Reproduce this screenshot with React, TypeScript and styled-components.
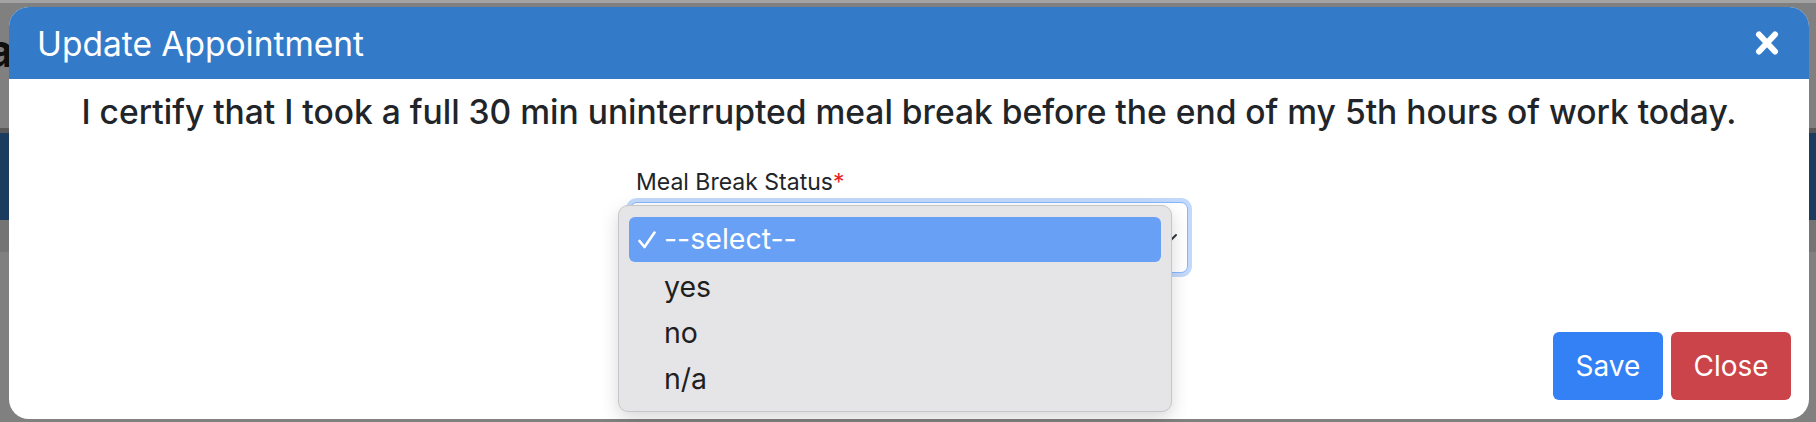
import React from "react";
import styled, { createGlobalStyle } from "styled-components";

const GlobalStyle = createGlobalStyle`
  html, body { margin: 0; padding: 0; }
  body {
    width: 1816px;
    height: 422px;
    overflow: hidden;
    background: #808080;
    font-family: Inter, "Noto Sans", "Liberation Sans", sans-serif;
  }
`;

const Page = styled.div`
  position: relative;
  width: 1816px;
  height: 422px;
  overflow: hidden;
  background: #808080;
`;

const Underlay = styled.div`
  display: flex;
  flex-direction: column;
  width: 100%;
`;

const TopStrip = styled.div`
  height: 3px;
  background: #a3a3a3;
`;

const HeadingRow = styled.div`
  height: 125px;
  display: flex;
  align-items: flex-start;
`;

const PageHeading = styled.h1`
  margin: 24px 0 0 -13px;
  font-size: 46px;
  font-weight: 700;
  line-height: 1;
  color: #0f0f0f;
`;

const NavEdge = styled.div`
  height: 5px;
  background: #595959;
`;

const NavBand = styled.div`
  height: 87px;
  background: #1b3b5f;
`;

const SubBand = styled.div`
  height: 32px;
  background: #747474;
`;

const Dialog = styled.div`
  position: absolute;
  left: 9px;
  top: 7px;
  width: 1800px;
  height: 412px;
  background: #ffffff;
  border-radius: 20px;
  display: flex;
  flex-direction: column;
`;

const Header = styled.div`
  height: 72px;
  flex: none;
  box-sizing: border-box;
  background: #337bc9;
  border-radius: 20px 20px 0 0;
  display: flex;
  align-items: center;
  justify-content: space-between;
  padding: 2px 30px 0 28px;
`;

const Title = styled.h4`
  margin: 0;
  color: #ffffff;
  font-size: 33.5px;
  font-weight: 400;
  line-height: 1.2;
`;

const CloseIcon = styled.svg`
  width: 24px;
  height: 26px;
  display: block;
  margin-top: -2px;
`;

const Body = styled.div`
  display: flex;
  flex-direction: column;
  align-items: center;
  padding-top: 13px;
`;

const Statement = styled.p`
  margin: 0;
  font-size: 33.6px;
  font-weight: 500;
  line-height: 40px;
  color: #212529;
  text-align: center;
`;

const FormGroup = styled.div`
  width: 558px;
  margin-top: 36px;
  display: flex;
  flex-direction: column;
`;

const Label = styled.label`
  padding-left: 6px;
  font-size: 23px;
  line-height: 28px;
  color: #212529;
  margin-bottom: 6px;
`;

const Required = styled.span`
  color: #e8231f;
`;

const SelectWrap = styled.div`
  position: relative;
`;

const SelectBox = styled.div`
  height: 71px;
  box-sizing: border-box;
  border: 1px solid #86b7fe;
  border-radius: 7px;
  background: #ffffff;
  box-shadow: 0 0 0 4px #c3d9fb;
  position: relative;
`;

const Chevron = styled.svg`
  position: absolute;
  right: 9px;
  top: 28px;
  width: 16px;
  height: 14px;
`;

const Menu = styled.div`
  position: absolute;
  left: -12px;
  top: 3px;
  width: 554px;
  box-sizing: border-box;
  padding: 11px 10px 11px;
  background: #e5e5e7;
  border: 1px solid #c6c6c8;
  border-radius: 10px;
  box-shadow: 0 6px 18px rgba(0, 0, 0, 0.16);
  display: flex;
  flex-direction: column;
`;

const MenuItem = styled.div<{ $active?: boolean }>`
  height: ${(p) => (p.$active ? "45px" : "46px")};
  box-sizing: border-box;
  display: flex;
  align-items: center;
  padding: ${(p) => (p.$active ? "0 0 0 9px" : "4px 0 0 9px")};
  border-radius: 6px;
  background: ${(p) => (p.$active ? "#68a0f6" : "transparent")};
  color: ${(p) => (p.$active ? "#ffffff" : "#1f1f21")};
  font-size: 28.5px;
  line-height: 1;
`;

const CheckSlot = styled.span`
  width: 26px;
  flex: none;
  display: flex;
  align-items: center;
`;

const CheckIcon = styled.svg`
  width: 18px;
  height: 18px;
`;

const Footer = styled.div`
  margin-top: auto;
  display: flex;
  justify-content: flex-end;
  gap: 8px;
  padding: 0 18px 19px 0;
`;

const Button = styled.button<{ $variant: "primary" | "danger" }>`
  height: 68px;
  padding: 0 20px;
  border: none;
  border-radius: 6px;
  font-family: inherit;
  font-size: 28px;
  color: #ffffff;
  background: ${(p) => (p.$variant === "primary" ? "#3381f5" : "#cb444a")};
  min-width: ${(p) => (p.$variant === "primary" ? "110px" : "120px")};
`;

const options = ["--select--", "yes", "no", "n/a"];

export default function App() {
  return (
    <Page>
      <GlobalStyle />
      <Underlay>
        <TopStrip />
        <HeadingRow>
          <PageHeading>a</PageHeading>
        </HeadingRow>
        <NavEdge />
        <NavBand />
        <SubBand />
      </Underlay>
      <Dialog>
        <Header>
          <Title>Update Appointment</Title>
          <CloseIcon viewBox="0 0 24 26">
            <path
              d="M4 4.5 L20 21.5 M20 4.5 L4 21.5"
              stroke="#ffffff"
              strokeWidth="6"
              strokeLinecap="round"
              fill="none"
            />
          </CloseIcon>
        </Header>
        <Body>
          <Statement>
            I certify that I took a full 30 min uninterrupted meal break before the end of my 5th hours of work today.
          </Statement>
          <FormGroup>
            <Label>
              Meal Break Status<Required>*</Required>
            </Label>
            <SelectWrap>
              <SelectBox>
                <Chevron viewBox="0 0 16 14">
                  <path d="M2 4 L8 10 L14 4" stroke="#343a40" strokeWidth="2" fill="none" strokeLinecap="round" strokeLinejoin="round" />
                </Chevron>
              </SelectBox>
              <Menu>
                {options.map((o, i) => (
                  <MenuItem key={o} $active={i === 0}>
                    <CheckSlot>
                      {i === 0 && (
                        <CheckIcon viewBox="0 0 18 18">
                          <path d="M1.5 10 L6.5 16 L16.5 1.5" stroke="#ffffff" strokeWidth="2.6" fill="none" strokeLinecap="round" strokeLinejoin="round" />
                        </CheckIcon>
                      )}
                    </CheckSlot>
                    {o}
                  </MenuItem>
                ))}
              </Menu>
            </SelectWrap>
          </FormGroup>
        </Body>
        <Footer>
          <Button $variant="primary">Save</Button>
          <Button $variant="danger">Close</Button>
        </Footer>
      </Dialog>
    </Page>
  );
}
